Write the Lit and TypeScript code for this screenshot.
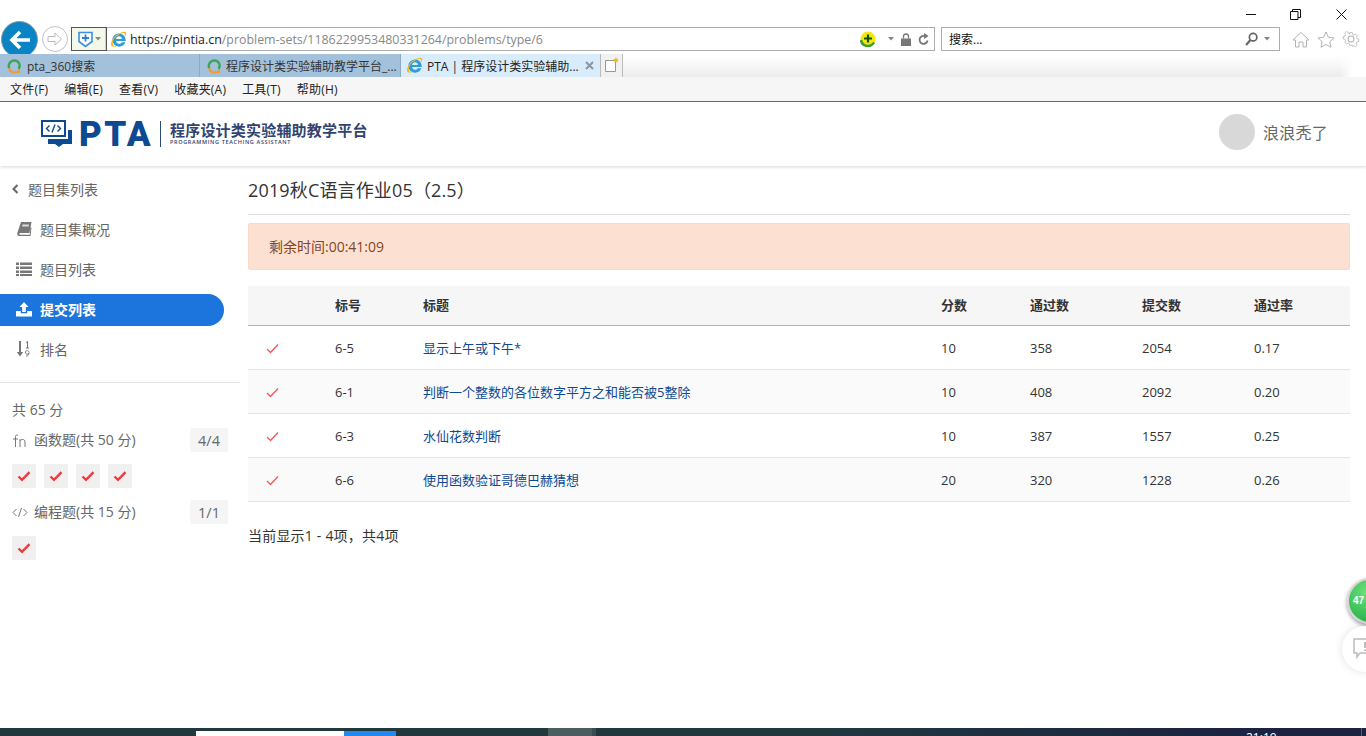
import { LitElement, html, css, svg } from "lit";
import { customElement } from "lit/decorators.js";

const ieIcon = (s: number) => html`<svg class="ie" width=${s} height=${s} viewBox="0 0 20 20"><path d="M18.500 11.800H7.200c.2 2 1.500 3.300 3.500 3.300 1.400 0 2.500-.6 3.100-1.800h4.300c-1 3-3.900 5.200-7.400 5.200-4.400 0-7.900-3.400-7.900-7.800 0-4.300 3.400-7.800 7.800-7.800 4.700 0 7.900 3.500 7.900 8.400v.5zM7.200 9.300h6.800c-.1-1.900-1.500-3.200-3.400-3.200-1.800 0-3.200 1.300-3.400 3.200z" fill="#2f9ed8"/><path d="M1.800 17.800C-.2 15 3 7.500 8.800 3.800c4.500-2.800 8.800-3.800 10-2.200 1 1.400-.1 3.600-1.800 5.400.6-1.900 1-3.500.2-4.200-1.100-.9-4-.2-7.300 1.900C4.800 7.800 2.300 12.500 3.500 15.800c.7 1.800 3.300 2.200 5 1.500-2.500 1.600-5.500 1-6.700.5z" fill="#f5b81c"/></svg>`;

const soIcon = html`<svg class="so" width="16" height="16" viewBox="0 0 16 16"><path d="M3.100 10.200A5.600 5.600 0 0 1 13.500 6" fill="none" stroke="#3aa655" stroke-width="2.400"/><path d="M13.500 6a5.600 5.600 0 0 1-1 5" fill="none" stroke="#3aa655" stroke-width="2.400"/><path d="M3.100 10.200a5.600 5.600 0 0 0 9.400 2.800l1.500 1.500" fill="none" stroke="#f29a38" stroke-width="2.400"/></svg>`;

const check = html`<svg class="chk" width="14" height="12" viewBox="0 0 14 12"><path d="M1.500 6.500 5 9.800 12.500 2.200" fill="none" stroke="#f23a3a" stroke-width="2.400"/></svg>`;
const thinCheck = html`<svg width="13" height="11" viewBox="0 0 13 11"><path d="M1 6 4.500 9.500 12 1.500" fill="none" stroke="#f0585a" stroke-width="1.300"/></svg>`;

const rows = [
  ["6-5", "显示上午或下午*", "10", "358", "2054", "0.17"],
  ["6-1", "判断一个整数的各位数字平方之和能否被5整除", "10", "408", "2092", "0.20"],
  ["6-3", "水仙花数判断", "10", "387", "1557", "0.25"],
  ["6-6", "使用函数验证哥德巴赫猜想", "20", "320", "1228", "0.26"],
];

const navIcons = {
  book: svg`<path d="M5 1h10.500l-2 11H4.200c-1.200 0-1.200 1.700 0 1.700h9.500l.9-7.500.9.500-1 8.300H3.300C1.500 15 1 13.500 1.300 12z" fill="#777"/><path d="M6.500 3.500h6.500l-.4 2H6.100z" fill="#ddd"/>`,
  list: svg`<path d="M0 1.500h3v2.600H0zM4 1.500h12v2.600H4zM0 5.500h3v2.600H0zM4 5.500h12v2.600H4zM0 9.500h3v2.600H0zM4 9.500h12v2.600H4zM0 13h3v2H0zM4 13h12v2H4z" fill="#777"/>`,
  upload: svg`<path d="M8 1 12.500 6H9.800v5H6.200V6H3.500zM0 10h4.800v2.200h6.400V10H16v5.500H0z" fill="#fff"/>`,
  sort: svg`<path d="M3 0h2v11h2.200L4 15.500.8 11H3z" fill="#777"/><path d="M10 1.500 11.500.5V7M9.800 7h3.400M13 11.500a1.800 1.800 0 1 0-.1.500c0 2-1 3-2.800 3" fill="none" stroke="#777"/>`,
};

@customElement("app-root")
export class AppRoot extends LitElement {
  static styles = css`
    :host {
      display: block;
      position: relative;
      width: 1366px;
      height: 736px;
      overflow: hidden;
      background: #fff;
      font-family: "Open Sans", "Noto Sans CJK SC", sans-serif;
      font-size: 13px;
      color: #333;
    }
    svg { flex: none; }
    .page { display: flex; flex-direction: column; height: 736px; }

    .titlebar { height: 27px; display: flex; justify-content: flex-end; align-items: flex-start; flex: none; }
    .winbtn { width: 46px; height: 27px; display: flex; align-items: center; justify-content: center; padding-top: 2px; box-sizing: border-box; }
    .winbtn.mid { width: 42px; }
    .winbtn.end { width: 50px; }

    .addr { height: 24px; flex: none; display: flex; align-items: center; position: relative; padding-left: 71px; }
    .urlbox { width: 864px; height: 24px; box-sizing: border-box; border: 1px solid #adadad; display: flex; align-items: center; background: #fff; }
    .shield { width: 34px; height: 22px; flex: none; background: #f2f9e9; border-right: 1px solid #ccc; outline: 1px solid #555; display: flex; align-items: center; gap: 2px; padding-left: 6px; box-sizing: border-box; }
    .ie-slot { margin-left: 4px; display: flex; }
    .url { font-size: 12.400px; margin-left: 3px; color: #888; flex: 1; white-space: nowrap; }
    .url b { font-weight: 400; color: #222; }
    .addr-tools { display: flex; align-items: center; gap: 7px; padding-right: 5px; }
    .caret-gap { margin-left: 5px; }
    .search { width: 339px; height: 24px; margin-left: 6px; box-sizing: border-box; border: 1px solid #adadad; display: flex; align-items: center; padding: 0 9px 0 7px; font-size: 12px; color: #111; }
    .search span { flex: 1; }
    .glass { margin-right: 6px; }
    .tools { display: flex; gap: 7px; margin-left: 12px; align-items: center; }
    .back { position: absolute; left: 1px; top: -6px; width: 37px; height: 37px; border-radius: 50%; background: #0a84c4; border: 1px solid #999; box-sizing: border-box; display: flex; align-items: center; justify-content: center; z-index: 2; }
    .fwd { position: absolute; left: 42px; top: -1px; width: 26px; height: 26px; border-radius: 50%; border: 1px solid #c4c4c4; box-sizing: border-box; display: flex; align-items: center; justify-content: center; background: #fff; }

    .tabs { height: 23px; margin-top: 3px; flex: none; display: flex; position: relative; z-index: 3; background: #fff; }
    .tab { height: 23px; box-sizing: border-box; display: flex; align-items: center; gap: 5px; font-size: 12px; white-space: nowrap; overflow: hidden; padding-left: 6px; background: #a3c1da; color: #333; border-right: 1px solid #8fa9be; flex: none; }
    .tab.a { width: 200px; }
    .tab.b { width: 201px; gap: 4px; }
    .tab.c { width: 200px; gap: 4px; background: #d9ecfb; border-right: 1px solid #bbb; padding-left: 5px; color: #222; }
    .tab .x { margin-left: auto; margin-right: 6px; }
    .newtab { width: 22px; height: 23px; display: flex; align-items: center; justify-content: center; background: #f1f1f1; border-right: 1px solid #bbb; flex: none; box-sizing: border-box; }
    .strip { flex: 1; margin-right: 12px; border-radius: 0 0 10px 0; background: linear-gradient(to right, rgba(255,255,255,0) 98%, #fff), linear-gradient(#fff 10%, #ececec); }

    .menu { height: 24px; flex: none; background: #f6f6f6; border-bottom: 1px solid #6e6e6e; display: flex; align-items: center; padding-left: 10px; gap: 16px; font-size: 12px; letter-spacing: .2px; color: #222; }

    .head { height: 64px; flex: none; display: flex; align-items: center; padding-left: 41px; box-shadow: 0 1px 3px rgba(0,0,0,.16); position: relative; z-index: 1; }
    .logo-word { font-family: Roboto, "Liberation Sans", sans-serif; font-weight: 900; font-size: 35px; color: #0e4a92; letter-spacing: 2.500px; line-height: 1; margin-left: 6px; width: 81px; }
    .logo-sep { width: 1px; height: 26px; background: #2b4a78; margin-right: 9px; flex: none; }
    .logo-txt { display: flex; flex-direction: column; color: #2f4470; margin-top: -2px; }
    .logo-txt .cn { font-size: 15px; font-weight: 700; line-height: 18px; letter-spacing: .2px; white-space: nowrap; }
    .logo-txt .en { font-size: 5.500px; line-height: 7px; letter-spacing: .66px; font-family: "Open Sans", sans-serif; font-weight: 600; white-space: nowrap; }
    .user { margin-left: auto; margin-right: 38px; margin-bottom: 4px; display: flex; align-items: center; gap: 8px; font-size: 16px; letter-spacing: .25px; color: #666; }
    .avatar { width: 36px; height: 36px; border-radius: 50%; background: #d8d8d8; }

    .body { flex: 1; display: flex; min-height: 0; }
    .side { width: 240px; flex: none; color: #666; font-size: 14px; }
    .crumb { height: 38px; margin: 4px 0 6px; display: flex; align-items: center; padding-left: 12px; gap: 9px; }
    .nav { height: 32px; margin-bottom: 8px; width: 224px; box-sizing: border-box; display: flex; align-items: center; gap: 8px; padding: 0 0 2px 16px; border-radius: 0 16px 16px 0; }
    .nav.on { background: #1c75dc; color: #fff; font-weight: 600; }
    .rule { height: 1px; background: #e4e4e4; margin-top: 16px; }
    .sum { padding: 0 12px; }
    .total { margin-top: 17px; height: 20px; line-height: 20px; }
    .group { display: flex; align-items: center; height: 24px; margin-top: 8px; gap: 6px; }
    .group .lbl { margin-bottom: 2px; }
    .group .bdg { margin-left: auto; width: 38px; height: 24px; background: #f5f5f5; border-radius: 2px; display: flex; align-items: center; justify-content: center; font-size: 14.500px; }
    .checks { display: flex; gap: 8px; margin-top: 12px; }
    .cb { width: 24px; height: 24px; border-radius: 2px; background: #f0f0f0; display: flex; align-items: center; justify-content: center; }
    .group + .checks + .group { margin-top: 12px; }

    .main { flex: 1; padding: 0 16px 0 8px; min-width: 0; }
    h1 { margin: 0; font-weight: 400; font-size: 18px; letter-spacing: .15px; line-height: 24px; padding-top: 12px; height: 49px; box-sizing: border-box; border-bottom: 1px solid #ddd; color: #333; }
    .alert { margin-top: 8px; height: 47px; box-sizing: border-box; border: 1px solid #fbd9c4; border-radius: 2px; background: #fce1d2; color: #84461e; display: flex; align-items: center; padding: 0 0 2px 20px; font-size: 14px; }
    .tbl { margin-top: 16px; }
    .tr { display: grid; grid-template-columns: 87px 88px 518px 89px 112px 112px 96px; align-items: center; height: 44px; box-sizing: border-box; border-bottom: 1px solid #e4e4e4; }
    .tr.hd { height: 40px; padding-bottom: 2px; background: #f6f6f6; border-bottom: 1px solid #b3b3b3; font-weight: 600; }
    .tr:nth-child(odd):not(.hd) { background: #fafafa; }
    .ck { padding: 2px 0 0 18px; display: flex; }
    .tr a { color: #0d4a94; text-decoration: none; }
    .foot { margin-top: 24px; line-height: 20px; font-size: 14px; letter-spacing: .2px; }

    .taskbar { height: 8px; flex: none; background: linear-gradient(to right, #22383f 60%, #1b2340 90%); position: relative; overflow: hidden; }
    .tb-white { position: absolute; left: 196px; top: 3px; width: 148px; height: 5px; background: #fff; }
    .tb-blue { position: absolute; left: 344px; top: 3px; width: 52px; height: 5px; background: #2288f2; }
    .tb-sel { position: absolute; left: 548px; top: 0; width: 44px; height: 8px; background: #4c5d62; }
    .tb-sep { position: absolute; left: 592px; top: 0; width: 4px; height: 8px; background: #3b4c52; }
    .tb-end { position: absolute; left: 1361px; top: 0; width: 1px; height: 8px; background: #56607a; }
    .tb-time { position: absolute; left: 1246px; top: 3px; color: #fff; font-size: 12px; line-height: 14px; }

    .float { position: absolute; overflow: hidden; }
    .ball { left: 1347px; top: 578px; width: 46px; height: 46px; box-sizing: border-box; border-radius: 50%; background: radial-gradient(circle at 40% 30%, #6be07a, #2fb84e 70%); border: 2px solid #d6d6d6; box-shadow: 0 2px 4px rgba(0,0,0,.4); color: #fff; font: 700 10px/42px "Liberation Sans", sans-serif; padding-left: 4px; }
    .fb { left: 1342px; top: 626px; width: 46px; height: 46px; border-radius: 50%; background: #fff; box-shadow: 0 0 8px rgba(0,0,0,.12); display: flex; align-items: center; padding-left: 11px; box-sizing: border-box; }
  `;

  render() {
    return html`<div class="page">
      <div class="titlebar">
        <div class="winbtn"><svg width="11" height="11"><path d="M0 5.500h10" stroke="#111"/></svg></div>
        <div class="winbtn mid"><svg width="11" height="11"><path d="M.5 2.500h7.500v8H.5zM2.500 2.500V.5h8v8H8" fill="none" stroke="#111"/></svg></div>
        <div class="winbtn end"><svg width="11" height="11"><path d="M.5.5l10 10M10.500.5l-10 10" stroke="#111"/></svg></div>
      </div>

      <div class="addr">
        <div class="back"><svg width="22" height="20" viewBox="0 0 22 20"><path d="M11 2 3 10l8 8M3 10h18" fill="none" stroke="#fff" stroke-width="3.600"/></svg></div>
        <div class="fwd"><svg width="16" height="14" viewBox="0 0 16 14"><path d="M1 4.500h7V1l6.500 6L8 13V9.500H1z" fill="none" stroke="#bbb"/></svg></div>
        <div class="urlbox">
          <div class="shield">
            <svg width="15" height="17" viewBox="0 0 15 17"><path d="M1 1.500h13v9L7.500 15.500 1 10.500z" fill="#fff" stroke="#3c8ee0" stroke-width="1.600"/><path d="M4 7h7M7.500 3.500v7" stroke="#2b7fd8" stroke-width="1.800"/></svg>
            <svg width="6" height="4"><path d="M0 0h6L3 3.500z" fill="#888"/></svg>
          </div>
          <div class="ie-slot">${ieIcon(17)}</div>
          <div class="url"><b>https://pintia.cn</b>/problem-sets/1186229953480331264/problems/type/6</div>
          <div class="addr-tools">
            <svg width="16" height="16" viewBox="0 0 16 16"><circle cx="8" cy="8" r="7.500" fill="#f4e60f"/><path d="M1 9a7 7 0 0 0 13 2.500" fill="none" stroke="#3c9e2c" stroke-width="2.500"/><path d="M4 7.500h8M8 3.500v8" stroke="#145214" stroke-width="2.200"/></svg>
            <svg class="caret-gap" width="6" height="4"><path d="M0 0h6L3 3.500z" fill="#888"/></svg>
            <svg width="10" height="13" viewBox="0 0 10 13"><path d="M2.500 5.500V3.500a2.500 2.500 0 0 1 5 0v2" fill="none" stroke="#777" stroke-width="1.300"/><path d="M0 5.500h10V13H0z" fill="#777"/></svg>
            <svg width="11" height="13" viewBox="0 0 11 13"><path d="M8.500 4.200a4 4 0 1 0 1 3.300" fill="none" stroke="#777" stroke-width="1.800"/><path d="M6 0v6l4.500-3z" fill="#777"/></svg>
          </div>
        </div>
        <div class="search"><span>搜索...</span>
          <svg class="glass" width="13" height="14" viewBox="0 0 12 13"><circle cx="7.500" cy="4.800" r="3.500" fill="none" stroke="#666" stroke-width="1.600"/><path d="M5 7.500 1 12" stroke="#666" stroke-width="2"/></svg>
          <svg width="6" height="4"><path d="M0 0h6L3 3.500z" fill="#888"/></svg>
        </div>
        <div class="tools">
          <svg width="18" height="17" viewBox="0 0 18 17"><path d="M1 9 9 1.500 17 9h-2.500v7H11v-5H7v5H3.500V9z" fill="none" stroke="#b4b4b4"/></svg>
          <svg width="18" height="17" viewBox="0 0 18 17"><path d="M9 1l2.400 5.300 5.600.6-4.200 3.800 1.200 5.600L9 13.500l-5 2.800 1.200-5.600L1 6.900l5.600-.6z" fill="none" stroke="#b4b4b4"/></svg>
          <svg width="18" height="18" viewBox="0 0 17 17"><circle cx="8.500" cy="8.500" r="2.800" fill="none" stroke="#b4b4b4"/><path d="M7 1h3l.4 2 1.600.8 1.900-1 2 2-1 1.800.7 1.600 2 .5v3l-2 .4-.7 1.600 1 1.800-2 2-1.900-1-1.600.7L10 16H7l-.4-2-1.600-.7-1.900 1-2-2 1-1.800-.7-1.600-2-.4v-3l2-.5.7-1.600-1-1.800 2-2 1.900 1L6.600 3z" transform="translate(1.700 1.700) scale(.8)" fill="none" stroke="#b4b4b4"/></svg>
        </div>
      </div>

      <div class="tabs">
        <div class="tab a">${soIcon}<span>pta_360搜索</span></div>
        <div class="tab b">${soIcon}<span>程序设计类实验辅助教学平台_...</span></div>
        <div class="tab c">${ieIcon(17)}<span>PTA | 程序设计类实验辅助...</span>
          <svg class="x" width="9" height="9"><path d="M1 1l7 7M8 1 1 8" stroke="#8a97a3" stroke-width="2"/></svg>
        </div>
        <div class="newtab"><svg width="17" height="17" viewBox="0 0 17 17"><path d="M2.500 3.500h10v11h-10z" fill="#fff" stroke="#999"/><path d="M13 0l1 2 2 .5-1.500 1.300.3 2L13 4.800l-1.800 1 .3-2L10 2.500l2-.5z" fill="#f5b81c"/></svg></div>
        <div class="strip"></div>
      </div>

      <div class="menu">
        <span>文件(F)</span><span>编辑(E)</span><span>查看(V)</span><span>收藏夹(A)</span><span>工具(T)</span><span>帮助(H)</span>
      </div>

      <div class="head">
        <svg width="32" height="28" viewBox="0 0 32 28">
          <path d="M0 0h25v17H0z" fill="#0e4a92"/><path d="M2 2h21v13H2z" fill="#fff"/>
          <path d="M8.500 5.500 5.500 8.500l3 3M16.500 5.500l3 3-3 3M14 4.500l-3 8" fill="none" stroke="#0e4a92" stroke-width="1.400"/>
          <path d="M7 19h20v-9h4v14H22l-4 3-4-3H7z" fill="#0e4a92"/>
        </svg>
        <div class="logo-word">PTA</div>
        <div class="logo-sep"></div>
        <div class="logo-txt"><span class="cn">程序设计类实验辅助教学平台</span><span class="en">PROGRAMMING TEACHING ASSISTANT</span></div>
        <div class="user"><div class="avatar"></div><span>浪浪秃了</span></div>
      </div>

      <div class="body">
        <aside class="side">
          <div class="crumb"><svg width="7" height="10" viewBox="0 0 7 10"><path d="M5.500 1 1.500 5l4 4" fill="none" stroke="#666" stroke-width="2"/></svg><span>题目集列表</span></div>
          <div class="nav"><svg width="16" height="16" viewBox="0 0 16 16">${navIcons.book}</svg><span>题目集概况</span></div>
          <div class="nav"><svg width="16" height="16" viewBox="0 0 16 16">${navIcons.list}</svg><span>题目列表</span></div>
          <div class="nav on"><svg width="16" height="16" viewBox="0 0 16 16">${navIcons.upload}</svg><span>提交列表</span></div>
          <div class="nav"><svg width="16" height="16" viewBox="0 0 16 16">${navIcons.sort}</svg><span>排名</span></div>
          <div class="rule"></div>
          <div class="sum">
            <div class="total">共 65 分</div>
            <div class="group">
              <svg width="16" height="16" viewBox="0 0 16 16"><path d="M6 3.500C5 2.500 3.500 3 3.500 4.500V15M1 7h5M8 7v8M8 9c1-2 5-2.500 5 1v5" fill="none" stroke="#777"/></svg>
              <span class="lbl">函数题(共 50 分)</span><span class="bdg">4/4</span>
            </div>
            <div class="checks">${[0, 1, 2, 3].map(() => html`<div class="cb">${check}</div>`)}</div>
            <div class="group">
              <svg width="16" height="16" viewBox="0 0 16 16"><path d="M4.500 5 1 8.500l3.500 3.500M11.500 5 15 8.500 11.500 12M9.500 4l-3 9" fill="none" stroke="#777"/></svg>
              <span class="lbl">编程题(共 15 分)</span><span class="bdg">1/1</span>
            </div>
            <div class="checks"><div class="cb">${check}</div></div>
          </div>
        </aside>

        <main class="main">
          <h1>2019秋C语言作业05（2.5）</h1>
          <div class="alert">剩余时间:00:41:09</div>
          <div class="tbl">
            <div class="tr hd"><span></span><span>标号</span><span>标题</span><span>分数</span><span>通过数</span><span>提交数</span><span>通过率</span></div>
            ${rows.map(
              (r) => html`<div class="tr"><span class="ck">${thinCheck}</span><span>${r[0]}</span><a href="#">${r[1]}</a><span>${r[2]}</span><span>${r[3]}</span><span>${r[4]}</span><span>${r[5]}</span></div>`
            )}
          </div>
          <div class="foot">当前显示1 - 4项，共4项</div>
        </main>
      </div>

      <div class="taskbar">
        <div class="tb-white"></div><div class="tb-blue"></div><div class="tb-sel"></div><div class="tb-sep"></div><div class="tb-end"></div>
        <div class="tb-time">21:19</div>
      </div>
    </div>

    <div class="float ball">47</div>
    <div class="float fb"><svg width="18" height="22" viewBox="0 0 18 22"><path d="M1 1h16v14H7l-3 4v-4H1z" fill="none" stroke="#bbb" stroke-width="1.500"/><path d="M12 4v6M12 11.500v1.500" stroke="#bbb" stroke-width="2"/></svg></div>`;
  }
}
